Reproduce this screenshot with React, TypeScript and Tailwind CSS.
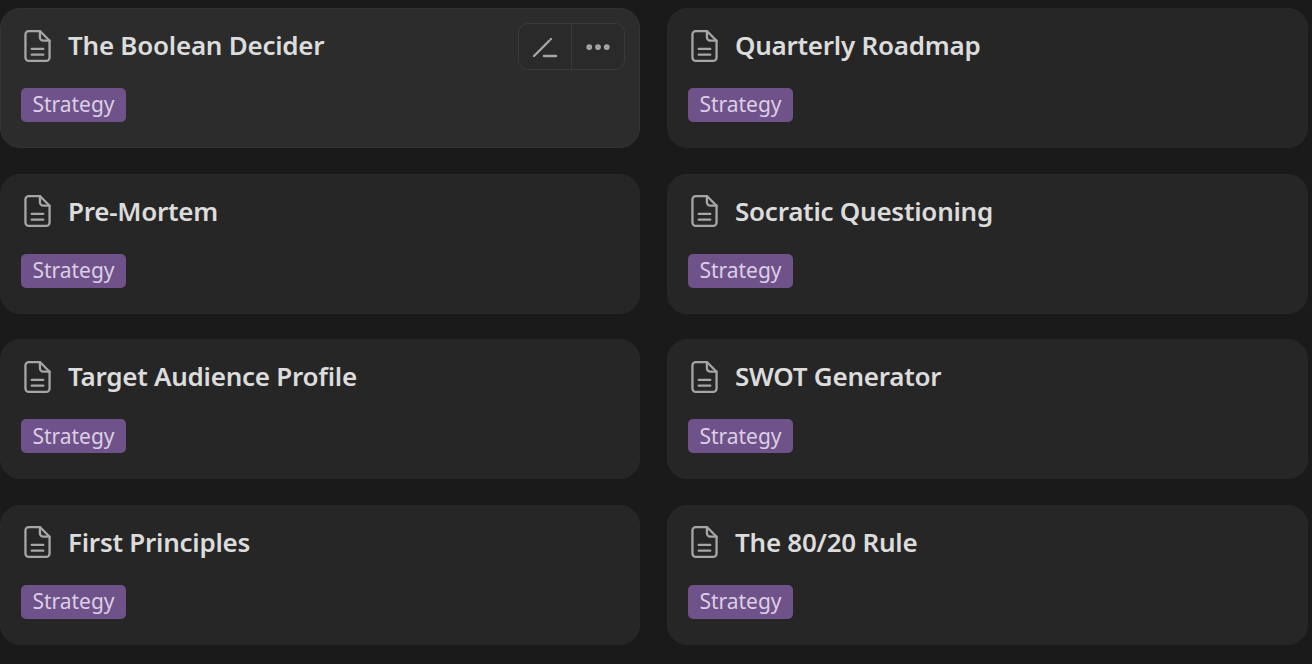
import { Ellipsis } from "lucide-react";

const titles = [
  "The Boolean Decider",
  "Quarterly Roadmap",
  "Pre-Mortem",
  "Socratic Questioning",
  "Target Audience Profile",
  "SWOT Generator",
  "First Principles",
  "The 80/20 Rule",
];

function DocIcon() {
  return (
    <svg width="27" height="34" viewBox="0 0 28 34" fill="none" stroke="#a6a6a6" strokeWidth="2.4" strokeLinecap="round" strokeLinejoin="round" className="shrink-0">
      <path d="M5 1.5h11.5L26.5 11.500v17.500a3.500 3.500 0 0 1-3.500 3.500H5a3.500 3.500 0 0 1-3.500-3.500V5A3.500 3.500 0 0 1 5 1.500z" />
      <path d="M16.500 1.500V8a3.500 3.500 0 0 0 3.500 3.500h6.500" />
      <path d="M8 20h12M8 26h12" />
    </svg>
  );
}

function PromptCard({ title, active }: { title: string; active: boolean }) {
  return (
    <div className={`relative h-[140px] rounded-[20px] border pl-[20px] pt-[16px] ${active ? "bg-[#2c2c2c] border-[#333333]" : "bg-[#262626] border-[#282828]"}`}>
      <div className="flex h-[41px] items-center">
        <div className="ml-[3px] w-[44px]">
          <DocIcon />
        </div>
        <span className="text-[26px] font-semibold tracking-[-0.25px] text-[#dcdcdc]">{title}</span>
      </div>
      <div className="mt-[22px] inline-flex h-[34px] w-[105px] items-center justify-center rounded-[5px] bg-[#6f5289] text-[21px] text-[#dccfe6]">
        Strategy
      </div>
      {active && (
        <div className="absolute right-[14px] top-[14px] flex h-[47px] w-[107px] rounded-[10px] border border-[#3a3a3a] bg-[#2a2a2a]">
          <div className="flex w-[53px] items-center justify-center border-r border-[#3a3a3a]">
            <svg width="26" height="22" viewBox="0 0 26 22" fill="none" stroke="#a6a6a6" strokeWidth="2.400" strokeLinecap="round">
              <path d="M2 20L17 5" />
              <path d="M18.500 3.500l.5-.5" />
              <path d="M12 20h12" />
            </svg>
          </div>
          <div className="flex flex-1 items-center justify-center">
            <Ellipsis size={30} color="#a6a6a6" strokeWidth={2.6} />
          </div>
        </div>
      )}
    </div>
  );
}

export default function App() {
  return (
    <div className="h-[664px] w-[1312px] overflow-hidden bg-[#1a1a1a] pt-[8px] font-['Noto_Sans',sans-serif]">
      <div className="grid grid-cols-[640px_641px] gap-x-[27px] gap-y-[25.670px]">
        {titles.map((title, i) => (
          <PromptCard key={title} title={title} active={i === 0} />
        ))}
      </div>
    </div>
  );
}
